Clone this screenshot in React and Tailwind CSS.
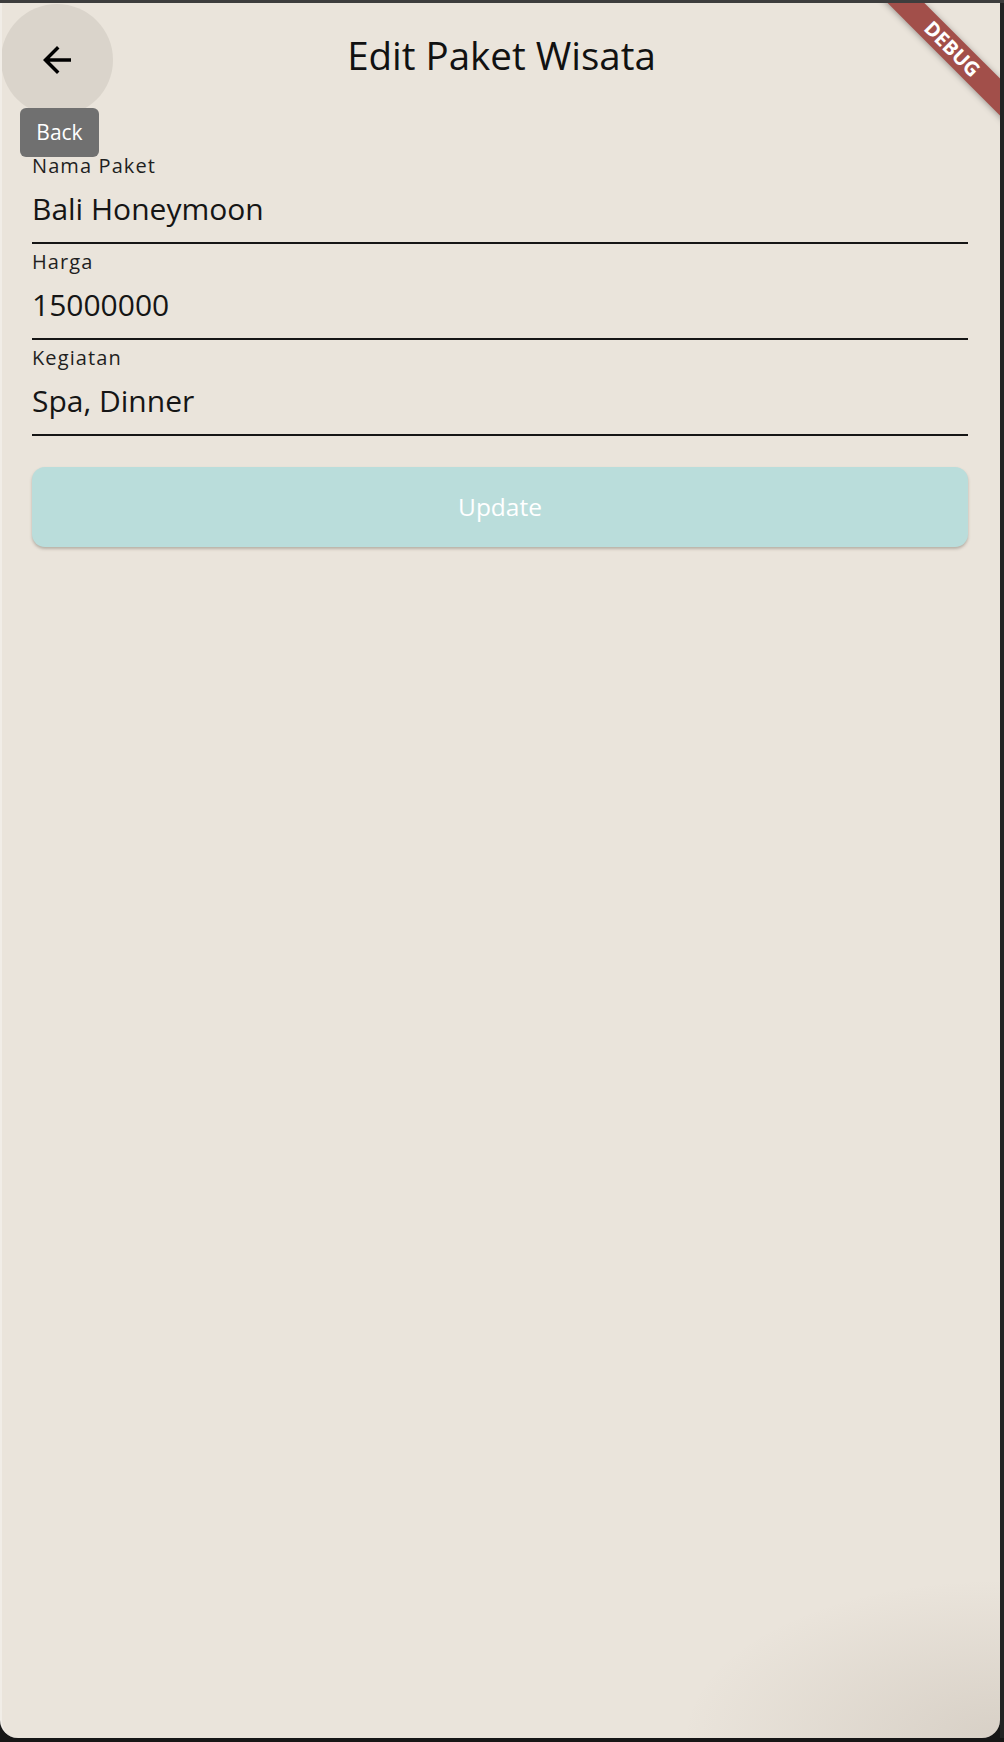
import React from 'react';

const fields = [
  { label: 'Nama Paket', value: 'Bali Honeymoon' },
  { label: 'Harga', value: '15000000' },
  { label: 'Kegiatan', value: 'Spa, Dinner' },
];

const ArrowBack = () => (
  <svg className="w-[42px] h-[42px]" viewBox="0 0 24 24" fill="currentColor">
    <path d="M20 11H7.83l5.59-5.59L12 4l-8 8 8 8 1.41-1.41L7.83 13H20v-2z" />
  </svg>
);

export default function App() {
  return (
    <div className="w-[1004px] h-[1742px] bg-[#161616] flex flex-col" style={{ fontFamily: '"Open Sans", "Noto Sans", sans-serif' }}>
      <div className="h-[3px] bg-[#3d3d3d]" />
      <div className="flex">
        <div className="relative w-[1000px] h-[1735px] bg-[#eae4db] rounded-b-[18px] overflow-hidden border-l-2 border-[#f1ede7]">
          {/* app bar */}
          <div className="flex items-center h-[104px]">
            <button className="w-[112px] h-[112px] mt-[10px] -ml-[1px] rounded-full bg-[#dad4cb] flex items-center justify-center text-black shrink-0">
              <ArrowBack />
            </button>
            <h1 className="flex-1 text-center text-[38.5px] leading-[38px] text-[#111] pr-[110px]">Edit Paket Wisata</h1>
          </div>

          {/* tooltip */}
          <div className="absolute left-[18px] top-[105px] w-[79px] h-[49px] rounded-[6px] bg-[#707070] text-white text-[21px] flex items-center justify-center">
            Back
          </div>

          {/* form */}
          <div className="flex flex-col gap-[6px] pl-[30px] pr-[32px] pt-[47px]">
            {fields.map((f) => (
              <div key={f.label} className="border-b-2 border-[#151515] pb-[13px]">
                <div className="text-[20px] leading-[24px] text-[#1f1f1f] tracking-[1.1px]">{f.label}</div>
                <div className="mt-[11px] text-[30px] leading-[40px] text-[#151515]">{f.value}</div>
              </div>
            ))}
            <button className="mt-[25px] h-[80px] rounded-[13px] bg-[#badddb] text-white text-[24.5px] shadow-[0_2px_3px_rgba(90,80,70,0.35)]">
              Update
            </button>
          </div>

          {/* debug banner */}
          <div className="absolute left-[840px] top-[33px] w-[220px] h-[26px] rotate-45 bg-[#a24f4a] shadow-[0_1px_6px_rgba(0,0,0,0.35)] flex items-center justify-center">
            <span className="text-white text-[20px] font-bold leading-none">DEBUG</span>
          </div>

          {/* window shade */}
          <div className="absolute right-0 bottom-0 w-[320px] h-[160px] bg-[radial-gradient(ellipse_at_bottom_right,rgba(120,105,90,0.16),rgba(120,105,90,0)_70%)]" />
        </div>
        <div className="w-[4px] bg-[#232323]" />
      </div>
    </div>
  );
}
